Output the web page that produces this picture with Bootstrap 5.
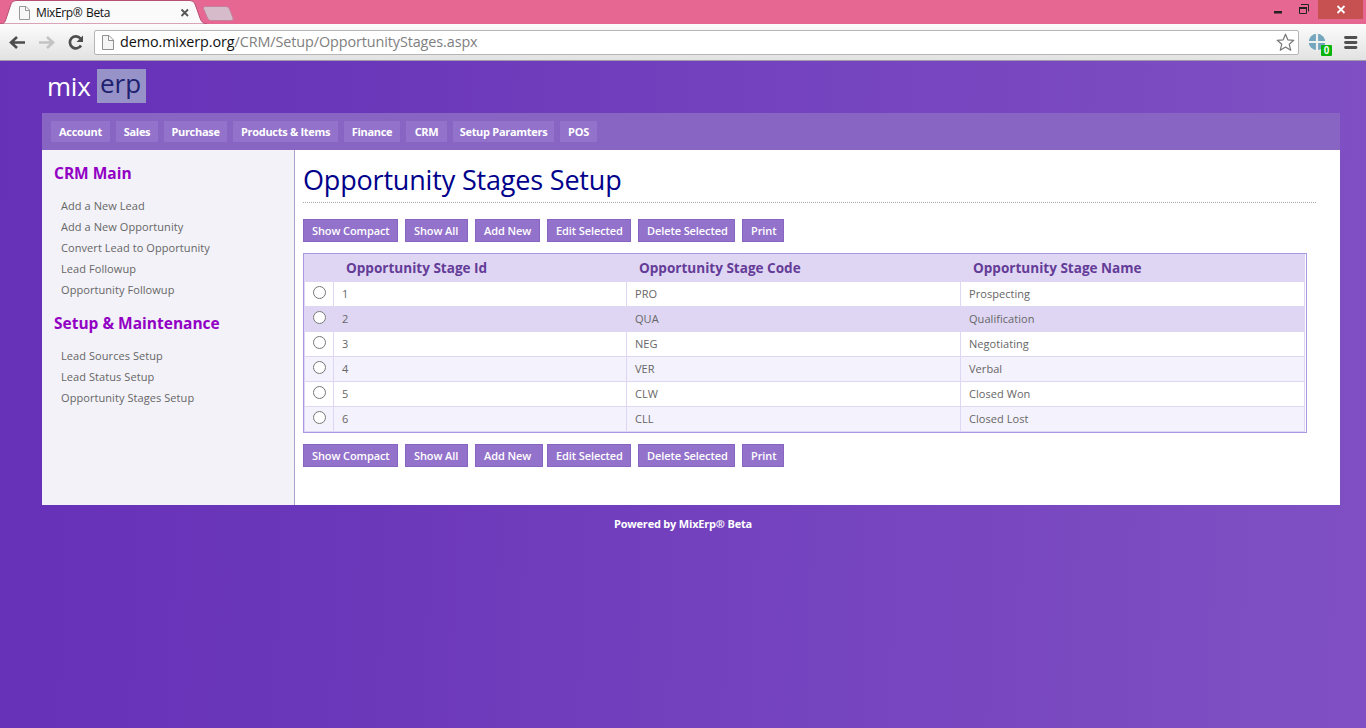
<!DOCTYPE html>
<html lang="en">
<head>
<meta charset="utf-8">
<meta name="viewport" content="width=device-width, initial-scale=1">
<title>MixErp® Beta</title>
<link href="https://cdn.jsdelivr.net/npm/bootstrap@5.3.0/dist/css/bootstrap.min.css" rel="stylesheet">
<style>
body { font-family: "Open Sans", "Noto Sans", sans-serif; font-size: 11px; line-height: 15px; height: 728px; overflow: hidden; color: #666;
  background: linear-gradient(92deg, #6631b7 0%, #6b37ba 25%, #7341be 52%, #7d4dc2 90%, #7f4fc3 100%); }
svg { display: block; flex: none; }
/* browser frame */
.titlebar { height: 24px; background: #e66791; }
.tabshape { left: 0; top: 0; }
.tabtitle { left: 36px; top: 5px; font-size: 12px; line-height: 16px; color: #111; letter-spacing: -.38px; word-spacing: 1px; white-space: nowrap; }
.winbtns { left: 1266px; top: 0; }
.toolbar { height: 37px; background: linear-gradient(#fcfcfc, #e2e2e2); border-bottom: 1px solid #a09cab; padding: 6px 8px 0 8px; }
.address { height: 25px; width: 1205px; margin-left: 9px; background: #fff; border: 1px solid #b5b5b5; border-radius: 2px; padding: 0 3px 0 6px; font-size: 14.4px; color: #808080; white-space: nowrap; }
.address b { font-weight: 400; color: #111; }
.address .url { letter-spacing: -.1px; margin-left: 6px; line-height: 20px; padding-bottom: 1px; }
/* page */
.page { width: 1298px; margin-left: 42px; }
.brand { height: 52px; padding: 8px 0 0 5px; font-size: 26px; line-height: 34px; color: #fff; }
.brand .mixword { width: 43px; letter-spacing: -.2px; }
.brand .erp { width: 49px; height: 34px; margin-left: 7px; background: #9793c8; color: #20206f; line-height: 29px; padding-left: 3px; }
.menubar { height: 37px; background: #8864c3; padding: 8px 9px; gap: 6px; }
.menubar a { height: 21px; background: #9372cb; color: #fff; font-weight: 700; line-height: 21px; text-align: center; text-decoration: none; white-space: nowrap; letter-spacing: -.3px; }
.main { height: 355px; background: #fff; }
.side { width: 253px; background: #f3f2f8; border-right: 1px solid #aaa4cd; padding: 13px 12px 0; }
.side h2 { font-size: 15.5px; line-height: 20px; font-weight: 700; color: #9200c4; margin: 0 0 12px; }
.side ul { padding-left: 7px; margin-bottom: 13px; }
.side li { height: 21px; line-height: 21px; }
.side a { color: #666; text-decoration: none; letter-spacing: .07px; }
.content { padding: 12px 24px 0 8px; }
.content h1 { height: 41px; margin: 0 0 16px; font-size: 27px; line-height: 35px; color: #00008b; font-weight: 400; letter-spacing: -.18px; border-bottom: 1px dotted #aaa; }
.actions { display: grid; grid-template-columns: 95px 63px 65px 84px 97px 42px; column-gap: 7px; }
.actions .btn { height: 23px; padding: 0 0 0 8px; text-align: left; font-size: 11px; line-height: 21px; font-weight: 600; letter-spacing: -.1px; border: 1px solid #8864c3; border-radius: 0; background: #9372cb; color: #fff; white-space: nowrap; }
.actions .wider { width: 68px; }
.grid-frame { width: 1004px; height: 180px; border: 1px solid #aa98e3; margin: 11px 0 11px; }
.stages { width: 1001px; table-layout: fixed; border-collapse: separate; border-spacing: 0; }
.stages th { height: 27px; padding: 1px 0 0 13px; background: #dfd6f3; color: #643c98; font-size: 13.55px; line-height: 26px; font-weight: 700; }
.stages td { height: 25px; padding: 0 0 0 8px; line-height: 24px; border-top: 1px solid #dfd6f3; border-left: 1px solid #dfd6f3; letter-spacing: .05px; }
.stages td:last-child { border-right: 1px solid #dfd6f3; }
.stages tr:last-child td { height: 26px; border-bottom: 1px solid #dfd6f3; }
.stages .alt td { background: #f4f2fc; }
.stages .sel td { background: #dfd6f3; }
.stages input { display: block; width: 13px; height: 13px; margin: 0 0 3px; }
.foot { margin-top: 11px; padding-right: 16px; line-height: 15px; font-weight: 700; color: #fff; letter-spacing: -.2px; }
</style>
</head>
<body>
<header>
  <div class="titlebar position-relative">
    <svg class="tabshape position-absolute" width="240" height="24" viewBox="0 0 240 24">
      <path d="M0 24C4 24 5 22 6 19L11 4Q12 .5 16 .5H190Q194 .5 195 4L200 18Q202 24 207 24Z" fill="#fafafa" stroke="#b84f74"/>
      <path d="M205.500 6.500H226Q228.500 6.500 229.500 9L233 18Q234 20.500 231 20.500H211Q208.500 20.500 207.500 18L203.500 8.500Q203 6.500 205.500 6.500Z" fill="#d6bccb" stroke="#c5809e"/>
      <path d="M19.500 6.500H26L29.500 10V19.500H19.500ZM25.500 6.500V10.500H29.500" fill="#f7f7f7" stroke="#999"/>
      <path d="M181.500 9.500L188 16M188 9.500L181.500 16" stroke="#555" stroke-width="1.8"/>
    </svg>
    <span class="tabtitle position-absolute">MixErp® Beta</span>
    <svg class="winbtns position-absolute" width="100" height="24" viewBox="0 0 100 24">
      <path d="M52 0H97V19H52Z" fill="#c75050"/>
      <path d="M8 11H16V13.500H8Z" fill="#222"/>
      <path d="M33.500 7.500H40.500V13.500H33.500ZM35 4.500H42.500V11.500" fill="none" stroke="#222"/>
      <path d="M33 7H41V9H33Z" fill="#222"/>
      <path d="M71.500 6L78.500 13M78.500 6L71.500 13" stroke="#fff" stroke-width="1.8"/>
    </svg>
  </div>
  <div class="toolbar d-flex">
    <svg width="77" height="25" viewBox="0 0 77 25">
      <path d="M17 12.500H3M9 7L3 12.500L9 18" fill="none" stroke="#4d4d4d" stroke-width="2.6"/>
      <path d="M31 12.500H45M39 7L45 12.500L39 18" fill="none" stroke="#c3c3c3" stroke-width="2.6"/>
      <path d="M72.500 8.500A6 6 0 1 0 73 15.500" fill="none" stroke="#4d4d4d" stroke-width="2.7"/>
      <path d="M75 5.500V12H68.500Z" fill="#4d4d4d"/>
    </svg>
    <div class="address d-flex align-items-center">
      <svg width="13" height="17" viewBox="0 0 13 17"><path d="M1.500 1.500H8L12.500 6V15.500H1.500ZM7.500 1.500V6.500H12.500" fill="#f5f5f5" stroke="#909090"/></svg>
      <span class="url"><b>demo.mixerp.org</b>/CRM/Setup/OpportunityStages.aspx</span>
      <svg class="ms-auto" width="19" height="19" viewBox="0 0 19 19"><path d="M9.500 1.200L11.800 6.800L17.800 7.300L13.200 11.200L14.700 17.200L9.500 14L4.300 17.200L5.800 11.200L1.200 7.300L7.200 6.800Z" fill="#fff" stroke="#777" stroke-width="1.2" stroke-linejoin="round"/></svg>
    </div>
    <svg class="ms-auto" width="52" height="27" viewBox="0 0 52 27">
      <circle cx="11" cy="12" r="8.300" fill="#74a7bd"/>
      <path d="M11 3V21M2 12H20" stroke="#f0f0f0" stroke-width="2.2"/>
      <rect x="15" y="15" width="11" height="11" rx="1" fill="#09b50c"/>
      <text x="20.500" y="24" font-family="Liberation Sans" font-size="10" font-weight="700" fill="#fff" text-anchor="middle">0</text>
      <path d="M39.500 7.500H50M39.500 12.500H50M39.500 17.500H50" stroke="#505050" stroke-width="2.800" stroke-linecap="round"/>
    </svg>
  </div>
</header>
<div class="page">
  <div class="brand d-flex"><span class="mixword">mix</span><span class="erp">erp</span></div>
  <nav class="menubar d-flex">
    <a href="#" style="width:59px">Account</a><a href="#" style="width:42px">Sales</a><a href="#" style="width:63px">Purchase</a><a href="#" style="width:105px">Products &amp; Items</a><a href="#" style="width:56px">Finance</a><a href="#" style="width:41px">CRM</a><a href="#" style="width:101px">Setup Paramters</a><a href="#" style="width:37px">POS</a>
  </nav>
  <div class="main d-flex">
    <aside class="side flex-shrink-0">
      <h2>CRM Main</h2>
      <ul class="list-unstyled">
        <li><a href="#">Add a New Lead</a></li>
        <li><a href="#">Add a New Opportunity</a></li>
        <li><a href="#">Convert Lead to Opportunity</a></li>
        <li><a href="#">Lead Followup</a></li>
        <li><a href="#">Opportunity Followup</a></li>
      </ul>
      <h2>Setup &amp; Maintenance</h2>
      <ul class="list-unstyled">
        <li><a href="#">Lead Sources Setup</a></li>
        <li><a href="#">Lead Status Setup</a></li>
        <li><a href="#">Opportunity Stages Setup</a></li>
      </ul>
    </aside>
    <main class="content flex-grow-1">
      <h1>Opportunity Stages Setup</h1>
      <div class="actions">
        <button class="btn">Show Compact</button><button class="btn">Show All</button><button class="btn">Add New</button><button class="btn">Edit Selected</button><button class="btn">Delete Selected</button><button class="btn">Print</button>
      </div>
      <div class="grid-frame">
        <table class="stages">
          <colgroup><col style="width:29px"><col style="width:293px"><col style="width:334px"><col></colgroup>
          <thead><tr><th></th><th>Opportunity Stage Id</th><th>Opportunity Stage Code</th><th>Opportunity Stage Name</th></tr></thead>
          <tbody>
            <tr><td><input type="radio" name="stage"></td><td>1</td><td>PRO</td><td>Prospecting</td></tr>
            <tr class="sel"><td><input type="radio" name="stage"></td><td>2</td><td>QUA</td><td>Qualification</td></tr>
            <tr><td><input type="radio" name="stage"></td><td>3</td><td>NEG</td><td>Negotiating</td></tr>
            <tr class="alt"><td><input type="radio" name="stage"></td><td>4</td><td>VER</td><td>Verbal</td></tr>
            <tr><td><input type="radio" name="stage"></td><td>5</td><td>CLW</td><td>Closed Won</td></tr>
            <tr class="alt"><td><input type="radio" name="stage"></td><td>6</td><td>CLL</td><td>Closed Lost</td></tr>
          </tbody>
        </table>
      </div>
      <div class="actions">
        <button class="btn">Show Compact</button><button class="btn">Show All</button><button class="btn wider">Add New</button><button class="btn">Edit Selected</button><button class="btn">Delete Selected</button><button class="btn">Print</button>
      </div>
    </main>
  </div>
  <footer class="foot text-center">Powered by MixErp® Beta</footer>
</div>
<script src="https://cdn.jsdelivr.net/npm/bootstrap@5.3.0/dist/js/bootstrap.bundle.min.js"></script>
</body>
</html>
